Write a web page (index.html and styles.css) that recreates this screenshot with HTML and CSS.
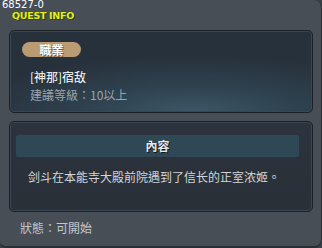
FILE: index.html
```html
<!DOCTYPE html>
<html>
<head>
<meta charset="utf-8">
<link rel="stylesheet" href="styles.css">
</head>
<body>
<div class="window">
  <div class="head">
    <div class="qid">68527-0</div>
    <div class="qtitle">QUEST INFO</div>
  </div>
  <div class="panel panel-top">
    <div class="badge">職業</div>
    <div class="name">[神那]宿敌</div>
    <div class="level">建議等級：10以上</div>
  </div>
  <div class="panel panel-content">
    <div class="bar">內容</div>
    <div class="desc">剑斗在本能寺大殿前院遇到了信长的正室浓姬。</div>
  </div>
  <div class="status">狀態：可開始</div>
</div>
</body>
</html>
```

FILE: styles.css
```css
html, body {
  margin: 0;
  padding: 0;
  background: #3a4048;
}
body {
  font-family: "Noto Sans CJK TC", "Noto Sans CJK SC", sans-serif;
}
.window {
  box-sizing: border-box;
  width: 322px;
  height: 248px;
  background: #474e56;
  border-radius: 0 7px 8px 6px;
  border-right: 1px solid #2a3036;
  border-bottom: 2px solid #2a3036;
  overflow: hidden;
  display: flex;
  flex-direction: column;
}
.head {
  height: 30px;
  display: flex;
  flex-direction: column;
}
.qid {
  font-family: "DejaVu Sans", sans-serif;
  font-size: 10px;
  line-height: 10px;
  color: #ffffff;
  padding-left: 2px;
}
.qtitle {
  font-family: "DejaVu Sans", sans-serif;
  font-weight: bold;
  font-size: 9.5px;
  line-height: 12px;
  color: #e4ee1c;
  padding-left: 12px;
  letter-spacing: -0.3px;
  text-shadow: 1px 1px 0 #2c3a10;
}
.panel {
  box-sizing: border-box;
  margin-left: 9px;
  width: 304px;
  border: 1px solid #1c2127;
  border-radius: 5px;
  box-shadow: inset 0 0 0 1px #3a4652;
}
.panel-top {
  height: 83px;
  padding: 11px 0 0 12px;
  background: radial-gradient(ellipse 75% 70% at 60% 100%, #3c5766 0%, #2f4250 45%, #27313b 100%);
}
.badge {
  width: 59px;
  height: 15px;
  border-radius: 8px;
  background: #b99b74;
  color: #ffffff;
  font-size: 12px;
  font-weight: bold;
  line-height: 15px;
  text-align: center;
  text-shadow: 1px 1px 0 #6e5a40;
}
.name {
  margin-top: 12px;
  padding-left: 8px;
  font-size: 12px;
  line-height: 16px;
  color: #ffffff;
}
.level {
  margin-top: 2px;
  padding-left: 8px;
  font-size: 12px;
  line-height: 16px;
  color: #9ba4ab;
}
.panel-content {
  margin-top: 8px;
  height: 91px;
  padding: 13px 0 0 6px;
  background: linear-gradient(#2c333c, #2a3038);
}
.bar {
  width: 283px;
  height: 22px;
  border-radius: 2px;
  background: #2f4855;
  color: #e6eaec;
  font-size: 12px;
  font-weight: bold;
  line-height: 22px;
  text-align: center;
  text-shadow: 1px 1px 0 #111619;
}
.desc {
  margin-top: 12px;
  padding-left: 12px;
  font-size: 12px;
  line-height: 16px;
  color: #d2d6da;
  white-space: nowrap;
}
.status {
  margin-top: 8px;
  padding-left: 20px;
  font-size: 12px;
  line-height: 16px;
  color: #c3c8cc;
}
```
